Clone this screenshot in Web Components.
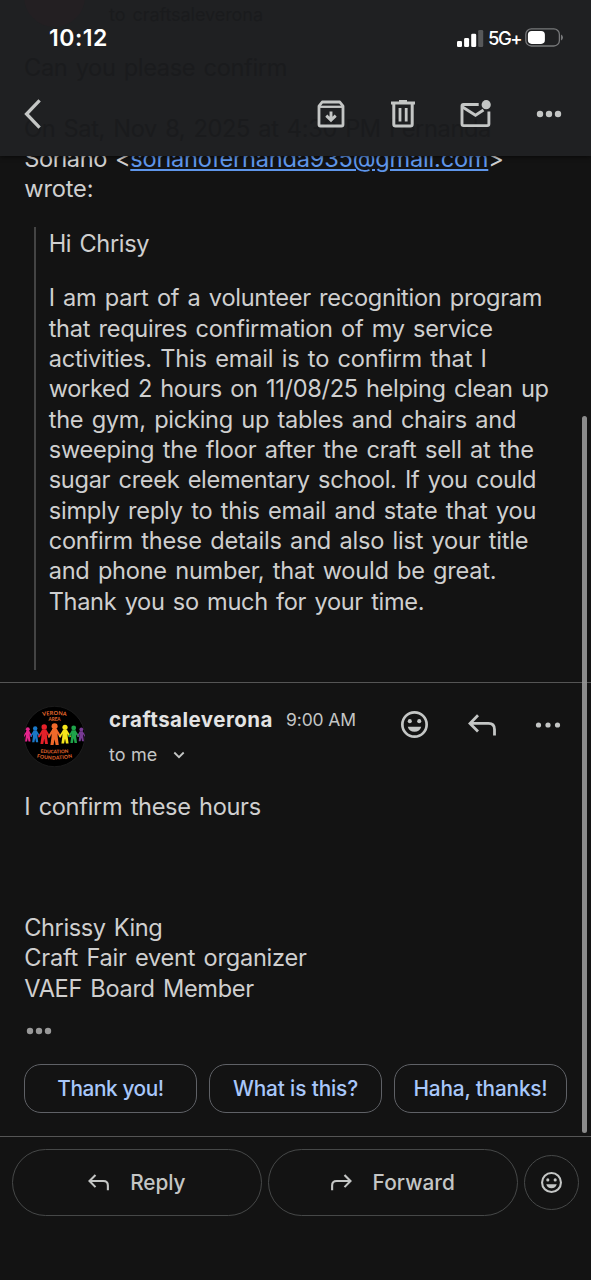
<!DOCTYPE html>
<html lang="en">
<head>
<meta charset="utf-8">
<title>Mail</title>
<style>
html,body{margin:0;background:#131313}
body{font-family:Inter,"Liberation Sans",sans-serif;color:#cfcfcf}
</style>
</head>
<body>
<mail-app></mail-app>
<script>
const define = (name, html, setup) => {
  const t = document.createElement('template');
  t.innerHTML = html;
  customElements.define(name, class extends HTMLElement {
    connectedCallback() {
      if (this.shadowRoot) return;
      this.attachShadow({mode: 'open'}).append(t.content.cloneNode(true));
      if (setup) setup(this, this.shadowRoot);
    }
  });
};

/* One line of text whose tracking is adjusted to a given width. */
define('fit-line', `<style>:host{display:block;white-space:pre}span{display:inline-block;white-space:pre}
:host([underlined]) span{text-decoration:underline;text-decoration-thickness:1.700px;text-underline-offset:2px}</style><span><slot></slot></span>`,
  (el, root) => {
    const span = root.querySelector('span'), w = +el.getAttribute('w');
    if (!w) return;
    const n = el.textContent.length;
    span.style.letterSpacing = ((w - span.getBoundingClientRect().width) / n) + 'px';
  });

const faces = '<circle cx="12" cy="12" r="9" fill="none" stroke="currentColor" stroke-width="2"/><circle cx="8.5" cy="9.5" r="1.5" fill="currentColor"/><circle cx="15.5" cy="9.5" r="1.5" fill="currentColor"/><path d="M7 13.6h10a5.2 5.2 0 0 1-10 0z" fill="currentColor"/>';
const icons = {
  back: ['0 0 16 28', '<path d="M14.7 1.2 2.4 14l12.3 12.8" fill="none" stroke="currentColor" stroke-width="3.1"/>'],
  archive: ['0 0 28 28', '<path d="M2 6.2 5.2 2h17.600L26 6.200V24.500Q26 26 24.500 26H3.500Q2 26 2 24.500Z" fill="none" stroke="currentColor" stroke-width="2.800" stroke-linejoin="round"/><path d="M2.500 6.800h23" stroke="currentColor" stroke-width="2.300"/><path d="M14 11.500v8M9.300 15.600l4.700 4.600 4.700-4.600" fill="none" stroke="currentColor" stroke-width="2.900"/>'],
  trash: ['0 0 24 28', '<path d="M0 2.900h24M8 1.500h8" fill="none" stroke="currentColor" stroke-width="3"/><path d="M2.800 3v21.200q0 1.800 1.800 1.800h14.800q1.800 0 1.800-1.800V3" fill="none" stroke="currentColor" stroke-width="3"/><path d="M9 8v13.500M15.200 8v13.500" stroke="currentColor" stroke-width="2.800"/>'],
  unread: ['0 0 31 28', '<path d="M18.700 4.500H3.500Q2 4.500 2 6V24Q2 25.600 3.500 25.600H27.300Q28.900 25.600 28.900 24V11.500" fill="none" stroke="currentColor" stroke-width="2.900"/><path d="M2.500 7 15.500 15.300 23.500 10" fill="none" stroke="currentColor" stroke-width="2.900"/><circle cx="26.200" cy="4.700" r="4.600" fill="currentColor"/>'],
  dots: ['0 0 26 8', '<g fill="currentColor"><circle cx="4" cy="4" r="3.200"/><circle cx="13" cy="4" r="3.200"/><circle cx="22" cy="4" r="3.200"/></g>'],
  more: ['0 0 26 8', '<g fill="currentColor"><circle cx="3.500" cy="4" r="2.600"/><circle cx="13" cy="4" r="2.600"/><circle cx="22.500" cy="4" r="2.600"/></g>'],
  face: ['2 2 20 20', faces],
  reply: ['0 0 28 22', '<path d="M10 1.300 2 9.400l8 8.100M2.400 9.400H20.500Q26.500 9.400 26.500 15.400V21.500" fill="none" stroke="currentColor" stroke-width="2.800"/>'],
  forward: ['0 0 28 22', '<path d="M18 1.300 26 9.400l-8 8.100M25.600 9.400H7.500Q1.500 9.400 1.500 15.400V21.500" fill="none" stroke="currentColor" stroke-width="2.800"/>'],
  down: ['0 0 12 8', '<path d="M1.300 1.500 6 6.200l4.700-4.700" fill="none" stroke="currentColor" stroke-width="1.800"/>'],
  bars: ['0 0 27 18', '<g fill="#fff"><rect x="0" y="12" width="5" height="6" rx="1.300"/><rect x="7.100" y="9" width="5" height="9" rx="1.300"/><rect x="14.200" y="4.800" width="5" height="13.200" rx="1.300"/><rect x="21.200" y="1" width="5" height="17" rx="1.300" opacity=".25"/></g>'],
  battery: ['0 0 39 19', '<rect x=".8" y=".8" width="33.600" height="17.200" rx="5.600" fill="none" stroke="#77787a" stroke-width="1.300"/><rect x="2.900" y="2.900" width="17" height="13" rx="3.800" fill="#fff"/><path d="M36 6.500q2 .8 2 3t-2 3z" fill="#77787a"/>']
};
define('ui-icon', `<style>:host{display:block;flex:none}svg{display:block;width:100%;height:100%}</style><svg></svg>`,
  (el, root) => {
    const [box, body] = icons[el.getAttribute('name')], s = root.querySelector('svg');
    s.setAttribute('viewBox', box);
    s.innerHTML = body;
    el.style.width = el.getAttribute('w') + 'px';
    el.style.height = el.getAttribute('h') + 'px';
  });

define('status-bar', `<style>
:host{display:flex;height:75px;align-items:center;box-sizing:border-box;padding:0 27px 0 49px;color:#fff}
.time{font-size:23px;font-weight:600;flex:1;padding-top:1px}.net{font-size:18.5px;font-weight:500;margin:1px 4px 0 4px;width:33px}
</style><fit-line class="time" w="59">10:12</fit-line><ui-icon name="bars" w="27" h="18"></ui-icon><fit-line class="net" w="33">5G+</fit-line><ui-icon name="battery" w="39" h="19"></ui-icon>`);

define('mail-toolbar', `<style>
:host{display:flex;height:77px;align-items:center;padding:0 29.500px 0 24px;color:#c4c6c5}
.gap{flex:1}.a{margin-right:46px}.b{margin-right:45px}.c{margin-right:45px}
</style><ui-icon name="back" w="17" h="30"></ui-icon><span class="gap"></span>
<ui-icon class="a" name="archive" w="28" h="28"></ui-icon><ui-icon class="b" name="trash" w="24" h="28"></ui-icon><ui-icon class="c" name="unread" w="31" h="28"></ui-icon><ui-icon name="dots" w="26" h="8"></ui-icon>`);

/* Header with a faint trace of the content scrolled beneath it. */
define('mail-header', `<style>
:host{display:block;position:relative;z-index:2;height:156px;background:#1f2022;overflow:hidden;box-shadow:0 1px 4px #0008}
.top{position:relative}
.ghost{position:absolute;inset:0;color:#1a1b1d;font-size:23.6px;line-height:30px;word-spacing:2px}
.ghost>*{position:absolute;left:24px}
.disc{left:24px;top:-34px;width:61px;height:61px;border-radius:50%;background:#231f22}
</style><div class="ghost"><div class="disc"></div><fit-line w="154" style="left:109px;top:0;font-size:18px">to craftsaleverona</fit-line><fit-line w="263" style="top:53px">Can you please confirm</fit-line><fit-line w="467" style="top:114px">On Sat, Nov 8, 2025 at 4:30 PM Fernanda</fit-line></div>
<div class="top"><status-bar></status-bar><mail-toolbar></mail-toolbar></div>`);

define('mail-quote', `<style>
:host{display:block;margin:22.500px 0 0 34px;height:443px;border-left:2px solid #444;padding:1.500px 0 0 12.700px;box-sizing:border-box}
</style><slot></slot>`);

define('sender-avatar', `<style>:host{display:block;width:61px;height:61px}svg{display:block}</style>
<svg width="61" height="61" viewBox="0 0 61 61" font-family="Lato,sans-serif" font-weight="700" fill="#e8692d" text-anchor="middle">
<defs><clipPath id="c"><circle cx="30.500" cy="30.500" r="30.500"/></clipPath>
<path id="t" d="M12 11.500Q30.500 6.500 49 11.500"/><path id="b" d="M8 50.300Q30.500 56.700 53 50.300"/><path id="m" d="M12 46.300Q30.500 48.300 49 46.300"/></defs>
<circle cx="30.500" cy="30.500" r="30.200" fill="#000" stroke="#292929" stroke-width=".6"/>
<g id="people" clip-path="url(#c)"></g>
<text font-size="5.600"><textPath href="#t" startOffset="50%" textLength="24">VERONA</textPath></text>
<text x="30.500" y="14.800" font-size="4.600" textLength="12">AREA</text>
<text font-size="4.800"><textPath href="#m" startOffset="50%" textLength="28">EDUCATION</textPath></text>
<text font-size="5"><textPath href="#b" startOffset="50%" textLength="36">FOUNDATION</textPath></text>
</svg>`, (el, root) => {
  const people = [[3.800,'#e5258c',.68],[11.200,'#1a78c8',.76],[20.200,'#e62129',.94],[30.600,'#f0692a',1.04],[41,'#f5e51b',.9],[49.700,'#1fa34a',.83],[57.300,'#783a94',.66]];
  root.querySelector('#people').innerHTML = people.map(([x, c, s]) =>
    `<g transform="translate(${x} 29) scale(${s})" fill="${c}" stroke="${c}"><circle cy="-8.500" r="2.900" stroke="none"/><path d="M-2.500-5.800h5L3 2 4 9.500H1L0 4-1 9.500H-4L-3 2Z" stroke="none"/><path d="M-2-4-5.500 1.500M2-4 5.500 1.500" fill="none" stroke-width="2" stroke-linecap="round"/></g>`).join('');
});

define('message-head', `<style>
:host{display:flex;height:61px;margin:23px 30px 0 24px;color:#c4c6c5}
.who{width:292px;padding-left:24px;box-sizing:border-box}
.row{display:flex;align-items:center;height:27px}
.name{font-size:20.500px;font-weight:700;color:#e3e3e3;width:177px}
.time{font-size:17.500px}
.to{font-size:18px;width:64px}.row+.row{margin-top:8px}
.acts{display:flex;height:37px;align-items:center;flex:1}
</style><sender-avatar></sender-avatar>
<div class="who"><div class="row"><fit-line class="name" w="164">craftsaleverona</fit-line><fit-line class="time" w="70">9:00 AM</fit-line></div>
<div class="row"><fit-line class="to" w="48.500">to me</fit-line><ui-icon name="down" w="12" h="8"></ui-icon></div></div>
<div class="acts"><ui-icon name="face" w="27" h="27" style="margin:0 40px 0 24.500px"></ui-icon><ui-icon name="reply" w="28" h="22" style="margin-right:39px;margin-top:1px"></ui-icon><ui-icon name="more" w="26" h="8"></ui-icon></div>`);

define('reply-chip', `<style>:host{display:flex;flex:1;height:49px;box-sizing:border-box;border:1.500px solid #5f6166;border-radius:17px;justify-content:center;align-items:center;color:#a8c7fa;font-size:20.800px;font-weight:500}</style><slot></slot>`);

define('action-pill', `<style>:host{display:flex;width:250px;height:67px;box-sizing:border-box;border:1.500px solid #464848;border-radius:34px;justify-content:center;align-items:center;gap:21px;color:#c4c6c5;font-size:20.800px;font-weight:500}
:host([round]){width:55px;height:55px}</style><slot></slot>`);

define('mail-app', `<style>
:host{display:flex;flex-direction:column;position:relative;width:591px;height:1280px;overflow:hidden;background:#131313}
.body{font-size:23.600px;line-height:30.350px;word-spacing:2px}
.intro{margin:-12px 0 0 24.300px}
.link{color:#5f96ea}
.addr{display:flex}
.rule{height:1px;background:#555;flex:none}
.sp{height:24.350px}
.msg{margin:24.500px 0 0 24.300px}
.sign{margin-top:91px}
.trim{margin:22.500px 0 0 26px;color:#999}
.chips{display:flex;gap:12px;margin:29px 24px 0}
.foot{display:flex;align-items:center;margin:12px 12px 0;gap:6.500px}
.bar{position:absolute;z-index:1;left:582px;top:416px;width:5px;height:717px;border-radius:3px;background:#999;opacity:.9}
</style>
<mail-header></mail-header>
<div class="body intro"><div class="addr"><fit-line w="106">Soriano &lt;</fit-line><fit-line class="link" underlined w="358">sorianofernanda935@gmail.com</fit-line><fit-line w="14">&gt;</fit-line></div><fit-line w="69">wrote:</fit-line></div>
<mail-quote class="body">
<fit-line w="100.500">Hi Chrisy</fit-line><div class="sp"></div>
<fit-line w="493.500">I am part of a volunteer recognition program</fit-line>
<fit-line w="444">that requires confirmation of my service</fit-line>
<fit-line w="438">activities. This email is to confirm that I</fit-line>
<fit-line w="500">worked 2 hours on 11/08/25 helping clean up</fit-line>
<fit-line w="467.500">the gym, picking up tables and chairs and</fit-line>
<fit-line w="485">sweeping the floor after the craft sell at the</fit-line>
<fit-line w="487.500">sugar creek elementary school. If you could</fit-line>
<fit-line w="487.500">simply reply to this email and state that you</fit-line>
<fit-line w="479.500">confirm these details and also list your title</fit-line>
<fit-line w="447.500">and phone number, that would be great.</fit-line>
<fit-line w="375.500">Thank you so much for your time.</fit-line>
</mail-quote>
<div class="rule" style="margin-top:12px"></div>
<message-head></message-head>
<div class="body msg"><fit-line w="236.500">I confirm these hours</fit-line>
<div class="sign"><fit-line w="138">Chrissy King</fit-line><fit-line w="282.300">Craft Fair event organizer</fit-line><fit-line w="229.500">VAEF Board Member</fit-line></div></div>
<ui-icon class="trim" name="dots" w="26" h="8"></ui-icon>
<div class="chips"><reply-chip><fit-line w="106.500">Thank you!</fit-line></reply-chip><reply-chip><fit-line w="125">What is this?</fit-line></reply-chip><reply-chip><fit-line w="134">Haha, thanks!</fit-line></reply-chip></div>
<div class="rule" style="margin-top:23.500px"></div>
<div class="foot"><action-pill><ui-icon name="reply" w="21" h="16.500"></ui-icon><fit-line w="55">Reply</fit-line></action-pill><action-pill><ui-icon name="forward" w="21" h="16.500"></ui-icon><fit-line w="82.500">Forward</fit-line></action-pill><action-pill round><ui-icon name="face" w="21" h="21"></ui-icon></action-pill></div>
<div class="bar"></div>`);
</script>
</body>
</html>
